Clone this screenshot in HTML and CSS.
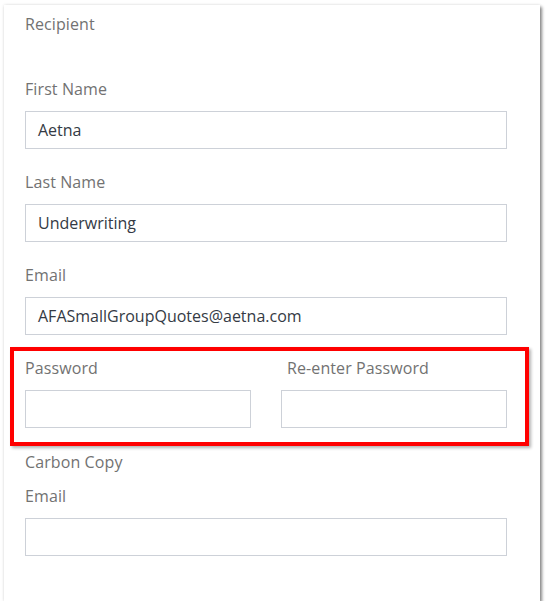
FILE: index.html
```html
<!DOCTYPE html>
<html>
<head>
<meta charset="utf-8">
<link rel="stylesheet" href="styles.css">
</head>
<body>
<div class="card">
  <div class="section-title">Recipient</div>
  <div class="field first">
    <div class="label">First Name</div>
    <div class="input">Aetna</div>
  </div>
  <div class="field">
    <div class="label">Last Name</div>
    <div class="input">Underwriting</div>
  </div>
  <div class="field">
    <div class="label">Email</div>
    <div class="input">AFASmallGroupQuotes@aetna.com</div>
  </div>
  <div class="pw-row">
    <div class="field-col">
      <div class="label">Password</div>
      <div class="input"></div>
    </div>
    <div class="field-col">
      <div class="label indent">Re-enter Password</div>
      <div class="input"></div>
    </div>
    <div class="highlight"></div>
  </div>
  <div class="section-title cc">Carbon Copy</div>
  <div class="field cc-email">
    <div class="label">Email</div>
    <div class="input"></div>
  </div>
</div>
</body>
</html>
```
FILE: styles.css
```css
html, body {
  margin: 0;
  padding: 0;
  background: #ffffff;
}
body {
  font-family: "Open Sans", "DejaVu Sans", sans-serif;
  font-size: 16px;
}
.card {
  margin: 5px 0 0 4px;
  width: 536px;
  height: 596px;
  box-sizing: border-box;
  padding: 8px 33px 0 21px;
  background: #fff;
  box-shadow: 2px 2px 3px rgba(0,0,0,0.45), 0 0 3px rgba(0,0,0,0.12);
}
.section-title, .label {
  line-height: 22px;
  color: #727272;
  letter-spacing: 0.1px;
}
.field {
  margin-top: 22px;
}
.field.first {
  margin-top: 43px;
}
.label {
  margin-bottom: 11px;
}
.label.indent {
  padding-left: 6px;
}
.input {
  height: 38px;
  box-sizing: border-box;
  border: 1px solid #cdd1d8;
  padding: 0 12px;
  line-height: 36px;
  color: #343a44;
}
.pw-row {
  position: relative;
  margin-top: 22px;
  display: grid;
  grid-template-columns: 226px 226px;
  column-gap: 30px;
}
.highlight {
  position: absolute;
  left: -15px;
  top: -10px;
  width: 519px;
  height: 99px;
  box-sizing: border-box;
  border: 4px solid #ff0000;
  box-shadow: 2px 2px 3px rgba(0,0,0,0.3);
  pointer-events: none;
}
.section-title.cc {
  margin-top: 23px;
}
.field.cc-email {
  margin-top: 12px;
}
```
